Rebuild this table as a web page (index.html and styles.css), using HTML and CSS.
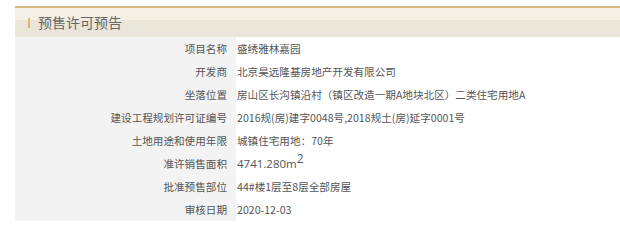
FILE: index.html
```html
<!DOCTYPE html>
<html lang="zh-CN">
<head>
<meta charset="utf-8">
<link rel="stylesheet" href="styles.css">
</head>
<body>
<div class="panel">
  <div class="head"><span class="bar"></span><span class="title">预售许可预告</span></div>
  <div class="table">
    <div class="lab">项目名称</div><div class="val">盛绣雅林嘉园</div>
    <div class="lab">开发商</div><div class="val">北京昊远隆基房地产开发有限公司</div>
    <div class="lab">坐落位置</div><div class="val">房山区长沟镇沿村（镇区改造一期A地块北区）二类住宅用地A</div>
    <div class="lab">建设工程规划许可证编号</div><div class="val">2016规(房)建字0048号,2018规土(房)延字0001号</div>
    <div class="lab">土地用途和使用年限</div><div class="val">城镇住宅用地：70年</div>
    <div class="lab">准许销售面积</div><div class="val num">4741.280m<sup>2</sup></div>
    <div class="lab">批准预售部位</div><div class="val">44#楼1层至8层全部房屋</div>
    <div class="lab">审核日期</div><div class="val">2020-12-03</div>
  </div>
</div>
</body>
</html>
```
FILE: styles.css
```css
html, body { margin: 0; padding: 0; background: #fff; }
body {
  font-family: "Noto Sans CJK SC", "Open Sans", sans-serif;
  color: #555;
  padding: 6px 0 0 15px;
}
.panel { width: 605px; }
.head {
  height: 29px;
  border-top: 2px solid #d9ba80;
  background: linear-gradient(#f5f0e5 0, #f5f0e5 12px, #ebe6da 12px, #ebe6da 100%);
  display: flex;
  align-items: center;
}
.bar {
  width: 2px;
  height: 10px;
  background: #e2b46e;
  margin-left: 13px;
  margin-right: 8px;
}
.title {
  font-size: 14px;
  color: #666;
  line-height: 29px;
}
.table {
  display: grid;
  grid-template-columns: 221px 1fr;
  grid-auto-rows: 23px;
  font-size: 10.6px;
}
.lab {
  background: #f3f3f3;
  text-align: right;
  padding-right: 9px;
  line-height: 23px;
  color: #555;
}
.val {
  padding-left: 1px;
  line-height: 23px;
  color: #555;
  white-space: nowrap;
}
.num { font-family: "Open Sans", "Noto Sans CJK SC", sans-serif; font-size: 11.5px; }
.val sup { font-size: 12px; line-height: 0; vertical-align: 5px; }
```
